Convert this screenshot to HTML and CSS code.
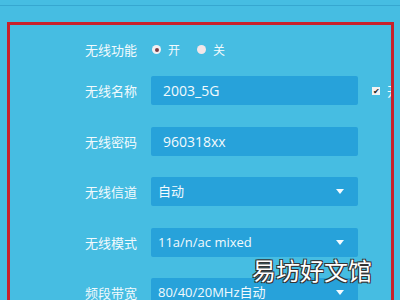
FILE: index.html
```html
<!DOCTYPE html>
<html lang="zh-CN">
<head>
  <meta charset="UTF-8">
  <title>无线设置</title>
  <link rel="stylesheet" href="styles.css">
</head>
<body>
  <div class="topbar"></div>
  <div class="frame">
    <div class="row first">
      <span class="label">无线功能</span>
      <div class="radios">
        <span class="radio checked"></span><span class="opt">开</span>
        <span class="radio"></span><span class="opt">关</span>
      </div>
    </div>
    <div class="row">
      <span class="label">无线名称</span>
      <div class="field">2003_5G</div>
      <div class="extra"><span class="check">✔</span><span>开启无线广播</span></div>
    </div>
    <div class="row">
      <span class="label">无线密码</span>
      <div class="field">960318xx</div>
    </div>
    <div class="row">
      <span class="label">无线信道</span>
      <div class="field select">自动<span class="arrow"></span></div>
    </div>
    <div class="row">
      <span class="label">无线模式</span>
      <div class="field select">11a/n/ac mixed<span class="arrow"></span></div>
    </div>
    <div class="row">
      <span class="label">频段带宽</span>
      <div class="field select">80/40/20MHz自动<span class="arrow"></span></div>
    </div>
  </div>
  <div class="watermark">易坊好文馆</div>
</body>
</html>
```

FILE: styles.css
```css
html, body {
  margin: 0;
  padding: 0;
  height: 300px;
  overflow: hidden;
}
body {
  background-color: #46bde2;
  color: #f2fafd;
  font-family: "Open Sans", "Noto Sans CJK SC", sans-serif;
  position: relative;
}
.topbar {
  height: 5px;
  border-bottom: 1px solid #36a7d0;
}
.frame {
  margin: 16px 0 0 7px;
  width: 381px;
  height: 400px;
  border: 3px solid #c8212c;
  padding-top: 10px;
  overflow: hidden;
  box-sizing: content-box;
}
.row {
  display: flex;
  align-items: center;
  height: 29px;
  margin-bottom: 21.5px;
}
.row.first {
  margin-bottom: 12px;
}
.label {
  width: 127px;
  text-align: right;
  font-family: "Noto Sans CJK SC", sans-serif;
  font-size: 13px;
  margin-right: 14px;
  flex-shrink: 0;
}
.radios {
  display: flex;
  align-items: center;
  font-family: "Noto Sans CJK SC", sans-serif;
  font-size: 12px;
}
.radio {
  width: 9px;
  height: 9px;
  border-radius: 50%;
  background-color: #f3e6e8;
  margin-left: 1px;
  margin-right: 7px;
  position: relative;
}
.radio.checked {
  background-color: #f4eef0;
}
.radio.checked::after {
  content: "";
  position: absolute;
  left: 2.5px;
  top: 2.5px;
  width: 4px;
  height: 4px;
  border-radius: 50%;
  background-color: #7a3d45;
}
.opt {
  margin-right: 16px;
}
.field {
  width: 195px;
  height: 29px;
  line-height: 29px;
  padding-left: 12px;
  background-color: #27a2da;
  border-radius: 2px;
  font-size: 14px;
  flex-shrink: 0;
  position: relative;
}
.select {
  font-family: "Noto Sans CJK SC", sans-serif;
  font-size: 13px;
  padding-left: 7px;
  width: 200px;
}
.select:nth-child(2) {
  font-family: "Open Sans", "Noto Sans CJK SC", sans-serif;
}
.arrow {
  position: absolute;
  right: 14px;
  top: 12px;
  width: 0;
  height: 0;
  border-left: 4px solid transparent;
  border-right: 4px solid transparent;
  border-top: 5px solid #f4fbff;
}
.extra {
  display: flex;
  align-items: center;
  margin-left: 14px;
  font-family: "Noto Sans CJK SC", sans-serif;
  font-size: 13px;
  white-space: nowrap;
}
.check {
  width: 8px;
  height: 8px;
  background-color: #f2f2f2;
  color: #222;
  font-size: 8px;
  line-height: 8px;
  text-align: center;
  margin-right: 7px;
}
.watermark {
  position: absolute;
  left: 252px;
  top: 252px;
  font-family: "Noto Sans CJK SC", sans-serif;
  font-size: 24px;
  color: #ffffff;
  text-shadow: 1px 1px 0 #333, -1px -1px 0 #333, 1px -1px 0 #333, -1px 1px 0 #333;
}
```
